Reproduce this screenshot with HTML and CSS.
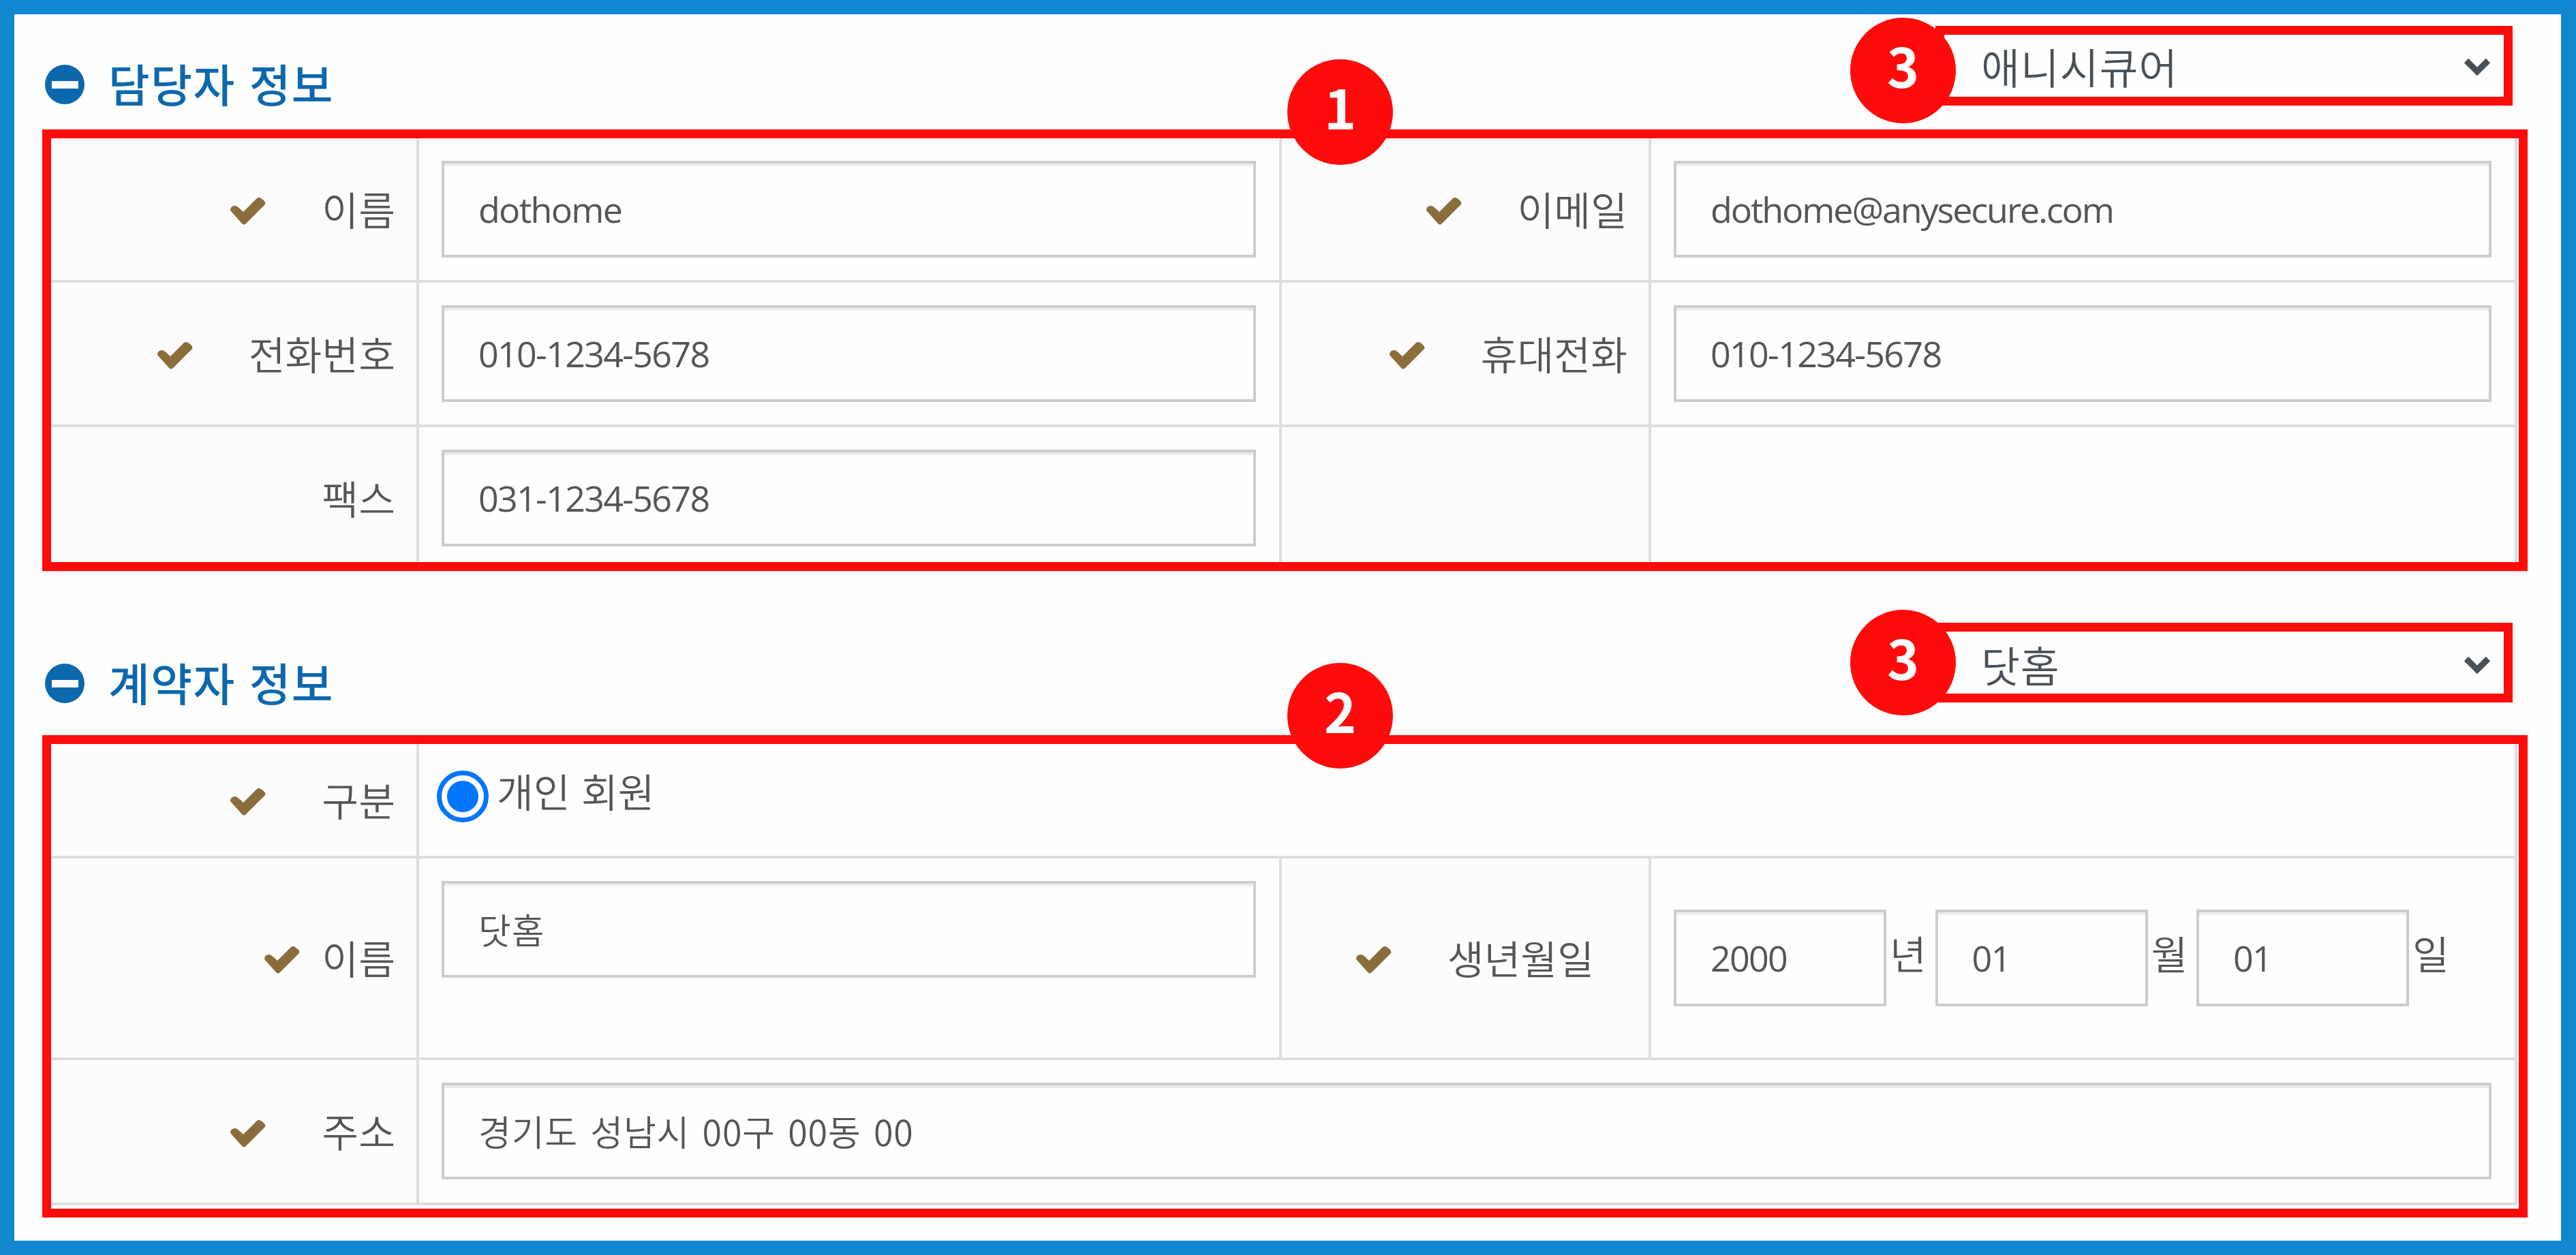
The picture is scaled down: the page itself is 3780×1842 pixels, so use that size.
FILE: index.html
```html
<!doctype html>
<html lang="ko">
<head>
  <meta charset="UTF-8">
  <meta name="viewport" content="width=device-width, initial-scale=1.0">
  <title>담당자 / 계약자 정보</title>
  <link rel="stylesheet" href="styles.css">
</head>
<body>
  <svg width="0" height="0" class="defs">
    <symbol id="check" viewBox="0 0 54 42">
      <path d="M1 20 Q1 13 8 13 Q11 13 20 22 L40 2 Q43 0 46 2 Q54 7 52 11 L24 39 Q21 42 18 39 Z"/>
    </symbol>
    <symbol id="minus" viewBox="0 0 60 60">
      <circle cx="30" cy="30" r="29"/>
      <rect x="11" y="25" width="39" height="11" fill="#fff"/>
    </symbol>
    <symbol id="arrow" viewBox="0 0 42 30">
      <path d="M5 6 L21 22 L37 6" fill="none" stroke="#495057" stroke-width="9"/>
    </symbol>
  </svg>

  <section class="manager">
    <div class="head">
      <h2><svg class="minus"><use href="#minus"/></svg>담당자 정보</h2>
      <div class="select">
        <span class="num">3</span>
        <span>애니시큐어</span>
        <svg class="arrow"><use href="#arrow"/></svg>
      </div>
    </div>
    <div class="frame">
      <span class="num">1</span>
      <div class="label"><svg class="check"><use href="#check"/></svg>이름</div>
      <div class="cell"><input type="text" value="dothome"></div>
      <div class="label"><svg class="check"><use href="#check"/></svg>이메일</div>
      <div class="cell"><input type="text" class="email" value="dothome@anysecure.com"></div>

      <div class="label"><svg class="check"><use href="#check"/></svg>전화번호</div>
      <div class="cell"><input type="text" value="010-1234-5678"></div>
      <div class="label"><svg class="check"><use href="#check"/></svg>휴대전화</div>
      <div class="cell"><input type="text" value="010-1234-5678"></div>

      <div class="label last">팩스</div>
      <div class="cell last"><input type="text" value="031-1234-5678"></div>
      <div class="label last"></div>
      <div class="cell last"></div>
    </div>
  </section>

  <section class="contractor">
    <div class="head">
      <h2><svg class="minus"><use href="#minus"/></svg>계약자 정보</h2>
      <div class="select">
        <span class="num">3</span>
        <span>닷홈</span>
        <svg class="arrow"><use href="#arrow"/></svg>
      </div>
    </div>
    <div class="frame">
      <span class="num">2</span>
      <div class="label"><svg class="check"><use href="#check"/></svg>구분</div>
      <div class="cell wide type"><span class="radio"></span><span>개인 회원</span></div>

      <div class="label near"><svg class="check"><use href="#check"/></svg>이름</div>
      <div class="cell"><input type="text" class="ko" value="닷홈"></div>
      <div class="label birth"><svg class="check"><use href="#check"/></svg>생년월일</div>
      <div class="cell date">
        <input type="text" value="2000"><span>년</span>
        <input type="text" value="01"><span>월</span>
        <input type="text" value="01"><span>일</span>
      </div>

      <div class="label"><svg class="check"><use href="#check"/></svg>주소</div>
      <div class="cell wide"><input type="text" class="ko" value="경기도 성남시 00구 00동 00"></div>
    </div>
  </section>
</body>
</html>
```
FILE: styles.css
```css
* {
  box-sizing: border-box;
}
body {
  margin: 0;
  width: 3780px;
  height: 1842px;
  border: 21px solid #1187d0;
  border-right-width: 22px;
  padding: 0 49px 0 41px;
  background: #fefefe;
  color: #555;
  font-family: "Noto Sans CJK KR", sans-serif;
  font-size: 58.5px;
  font-weight: 350;
  line-height: 1;
  overflow: hidden;
}
.defs {
  position: absolute;
}

/* section title + select */
.head {
  display: flex;
  justify-content: space-between;
  align-items: flex-start;
  height: 169px;
  padding: 17px 22px 0 3px;
}
.contractor .head {
  height: 241px;
  padding-top: 76px;
}
h2 {
  display: flex;
  align-items: flex-start;
  gap: 34px;
  margin: 50px 0 0;
  height: 66px;
  color: #0c68ad;
  font-size: 66px;
  font-weight: 500;
  letter-spacing: 1.5px;
}
.contractor h2 {
  margin-top: 53px;
}
.minus {
  width: 60px;
  height: 60px;
  margin-top: 6px;
  fill: #0c68ad;
}
.select {
  position: relative;
  display: flex;
  justify-content: space-between;
  align-items: center;
  width: 847px;
  height: 117px;
  padding: 0 18px 0 54px;
  border: 13px solid #ff0b0b;
  color: #495057;
  font-size: 62px;
  letter-spacing: 0.8px;
}
.contractor .select {
  padding-top: 4px;
}
.arrow {
  width: 42px;
  height: 30px;
  margin-top: 2px;
}

/* numbered markers */
.num {
  position: absolute;
  display: flex;
  justify-content: center;
  align-items: center;
  width: 155px;
  height: 155px;
  padding-bottom: 20px;
  border-radius: 50%;
  background: #ff0b0b;
  color: #fff;
  font-size: 80px;
  font-weight: 700;
  letter-spacing: 0;
}
.select .num {
  left: -138px;
  top: -25px;
}
.contractor .select .num {
  top: -32px;
}
.frame > .num {
  left: 1814px;
  top: -116px;
}
.contractor .frame > .num {
  top: -119px;
}

/* form table */
.frame {
  position: relative;
  display: grid;
  grid-template-columns: 540px 1266px 542px 1271px;
  grid-template-rows: 212px 212px 198px;
  width: 3647px;
  height: 648px;
  border: 13px solid #ff0b0b;
  box-shadow: 0 2px #ddd;
}
.contractor .frame {
  grid-template-rows: 168px 296px 213px;
  height: 708px;
  box-shadow: none;
}
.label,
.cell {
  border-right: 4px solid #ddd;
  border-bottom: 4px solid #ddd;
}
.last {
  border-bottom: 0;
}
.label {
  display: flex;
  justify-content: flex-end;
  align-items: center;
  gap: 81px;
  padding: 0 31px 2px 0;
  background: #fcfcfc;
}
.last.label {
  padding-top: 10px;
}
.near {
  gap: 31px;
}
.birth {
  padding-right: 80px;
}
.check {
  width: 54px;
  height: 42px;
  margin-top: 8px;
  fill: #8b6d3b;
}
.cell {
  padding: 33px 34px 0 33px;
}
.wide {
  grid-column: span 3;
}
input {
  display: block;
  width: 100%;
  height: 142px;
  margin: 0;
  padding: 0 0 2px 50px;
  border: 4px solid #ccc;
  border-radius: 0;
  background: #fefefe;
  box-shadow: inset 0 4px #ededed;
  color: #555;
  font-family: "Open Sans", "Noto Sans CJK KR", sans-serif;
  font-size: 52px;
  font-weight: 400;
  letter-spacing: -1.7px;
}
.email {
  letter-spacing: -2.1px;
}
input.ko {
  font-family: "Noto Sans CJK KR", sans-serif;
  font-weight: 350;
  letter-spacing: 0.8px;
  word-spacing: 3px;
}
.type {
  display: flex;
  align-items: flex-start;
  padding: 39px 0 0 26px;
  gap: 12px;
}
.radio {
  width: 76px;
  height: 76px;
  border: 7px solid #0075ff;
  border-radius: 50%;
  background: radial-gradient(circle, #0075ff 22.5px, #fff 23.5px);
}
.date {
  display: flex;
  padding-top: 75px;
}
.date input {
  width: 312px;
}
.date span {
  width: 71.5px;
  padding: 34px 0 0 5px;
}
```
